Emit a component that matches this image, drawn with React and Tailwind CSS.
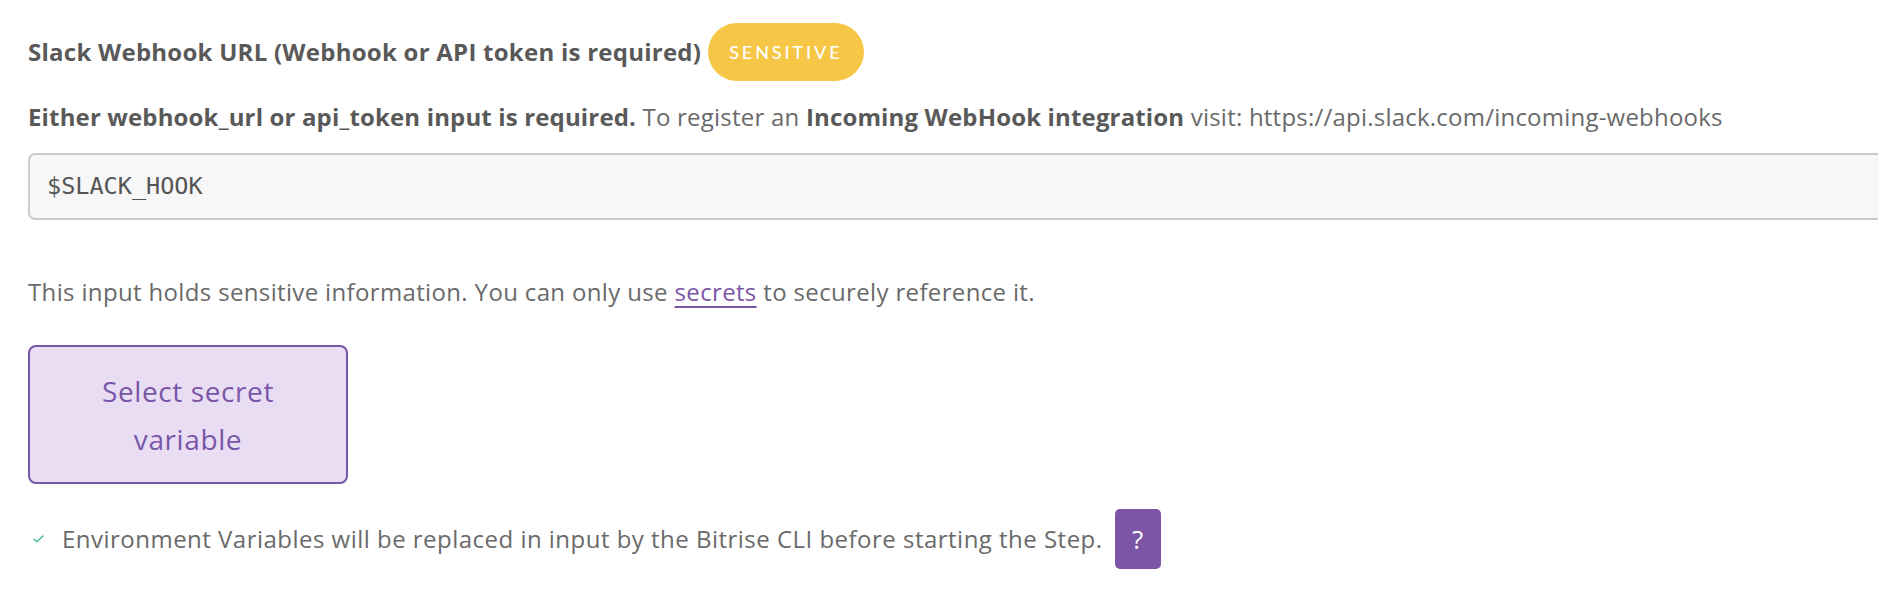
import React from 'react';

const CheckIcon = () => (
    <svg width="11" height="8" viewBox="0 0 11 8" fill="none">
        <path d="M1 4.2 L3.8 6.8 L10 1" stroke="#3fbf8f" strokeWidth="1.4" strokeLinecap="round" strokeLinejoin="round" />
    </svg>
);

const App = () => {
    return (
        <div className="w-full h-[602px] overflow-hidden bg-white font-['Open_Sans','Noto_Sans',sans-serif] text-[#6a6a6a]">
            <div className="pl-[28px] pt-[23px]">
                {/* label + sensitive badge */}
                <div className="flex items-center gap-[7px]">
                    <h2 className="text-[24px] leading-[30px] font-bold tracking-[0.25px] text-[#595959]">
                        Slack Webhook URL (Webhook or API token is required)
                    </h2>
                    <span className="h-[58px] px-[21px] flex items-center rounded-full bg-[#f6c746] text-white text-[18px] tracking-[2.9px] font-['Lato',sans-serif] font-medium">
                        SENSITIVE
                    </span>
                </div>

                <p className="mt-[21px] text-[24px] leading-[30px] tracking-[0.22px]">
                    <span className="font-bold tracking-[0.15px] text-[#595959]">Either webhook_url or api_token input is required.</span>{' '}
                    To register an <span className="font-bold tracking-[0.15px] text-[#595959]">Incoming WebHook integration</span> visit:
                    https://api.slack.com/incoming-webhooks
                </p>

                {/* value input */}
                <div className="mt-[21px] w-[1900px] h-[67px] flex items-center pl-[17px] bg-[#f7f7f7] border-2 border-[#cacaca] rounded-l-[7px] font-['DejaVu_Sans_Mono','Liberation_Mono',monospace] text-[23.5px] text-[#555]">
                    $SLACK_HOOK
                </div>

                <p className="mt-[57px] text-[24px] leading-[30px] tracking-[0.35px]">
                    This input holds sensitive information. You can only use{' '}
                    <a href="#" className="text-[#7a55a8] underline decoration-2 underline-offset-[5px]">secrets</a>{' '}
                    to securely reference it.
                </p>

                <button className="mt-[38px] w-[320px] h-[139px] flex flex-col items-center justify-center border-2 border-[#7a56a8] rounded-[8px] bg-[#e9ddf4] text-[#7a56a8] text-[28px] leading-[48px] font-medium tracking-[0.6px]">
                    <span>Select secret</span>
                    <span>variable</span>
                </button>

                <div className="mt-[25px] flex items-center">
                    <span className="ml-[5px] mr-[18px] flex items-center">
                        <CheckIcon />
                    </span>
                    <span className="text-[24px] leading-[30px] tracking-[0.48px]">
                        Environment Variables will be replaced in input by the Bitrise CLI before starting the Step.
                    </span>
                    <button className="ml-[12px] w-[46px] h-[60px] flex items-center justify-center rounded-[5px] bg-[#7b55a6] text-white text-[26px]">
                        ?
                    </button>
                </div>
            </div>
        </div>
    );
};

export default App;
